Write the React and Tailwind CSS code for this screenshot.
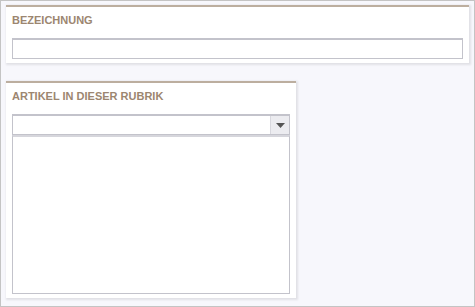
import React from "react";

const Panel = ({ title, className = "", children }) => (
  <div
    className={`bg-white border-t-2 border-[#bcae9f] shadow-[1px_1px_2px_1px_rgba(0,0,0,0.09)] px-[6px] ${className}`}
  >
    <div className="pt-[6px] pb-[6px] text-[11px] font-bold text-[#9c8670] leading-[14px]">{title}</div>
    {children}
  </div>
);

export default function App() {
  return (
    <div
      className="w-[475px] h-[307px] bg-[#f7f7fc] border border-[#c4c4c4] pt-[4px] pl-[5px] overflow-hidden"
      style={{ fontFamily: '"Liberation Sans", Arial, sans-serif' }}
    >
      <Panel title="BEZEICHNUNG" className="w-[463px] h-[58px]">
        <div className="mt-[5px] h-[21px] border border-[#c3c3cb] border-t-2 bg-white" />
      </Panel>

      <Panel title="ARTIKEL IN DIESER RUBRIK" className="w-[290px] h-[217px] mt-[18px]">
        <div className="mt-[5px] flex h-[21px] border border-[#c3c3cb] border-t-2 bg-white">
          <div className="flex-1" />
          <div className="w-[19px] bg-[#ececf0] border-l border-[#d8d8de] flex items-center justify-center">
            <svg width="9" height="5" viewBox="0 0 9 5">
              <path d="M0 0h9L4.5 5z" fill="#555" />
            </svg>
          </div>
        </div>
        <div className="h-[159px] border border-[#c3c3cb] border-t-2 border-t-[#d6d6dc] bg-white" />
      </Panel>
    </div>
  );
}
